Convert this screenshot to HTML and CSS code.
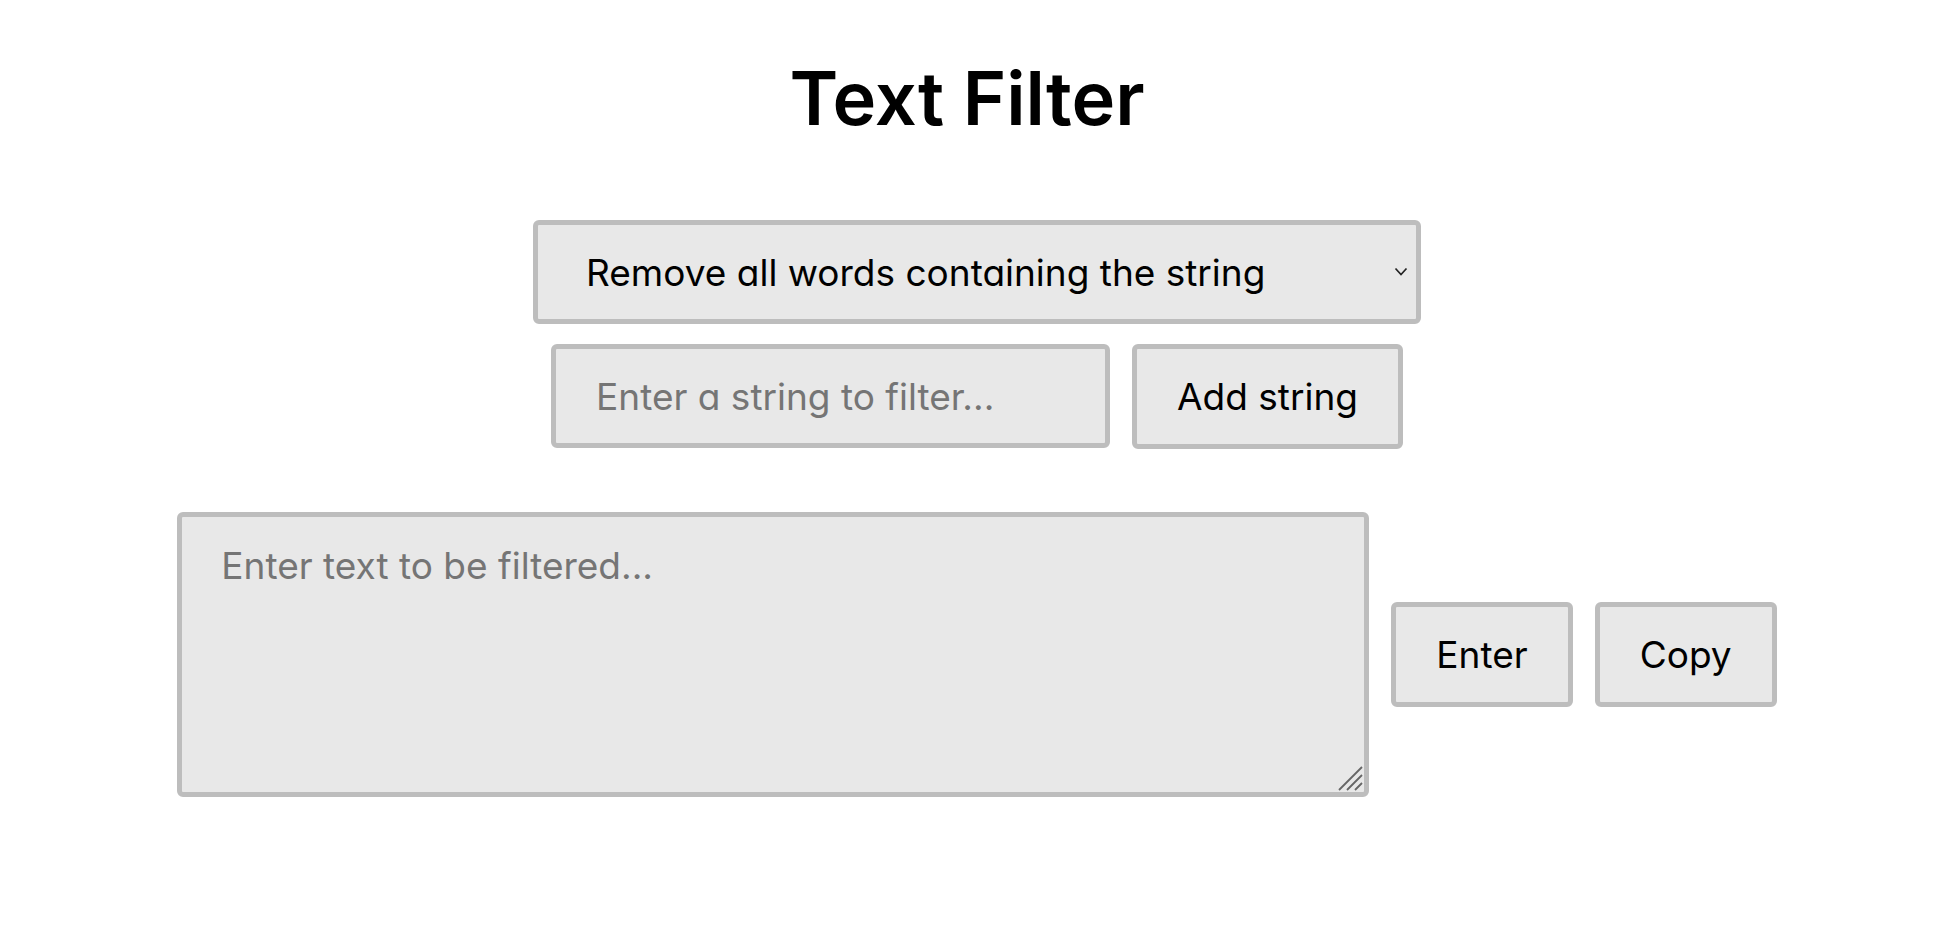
FILE: index.html
```html
<!DOCTYPE html>
<html lang="en">
<head>
  <meta charset="UTF-8" />
  <meta name="viewport" content="width=device-width, initial-scale=1" />
  <title>Text Filter</title>
  <link rel="stylesheet" href="styles.css">
</head>
<body>
  <h1 class="title">Text Filter</h1>

  <div class="controls">
    <div class="select-wrap">
      <select class="mode">
        <option>Remove all words containing the string</option>
        <option>Remove all lines containing the string</option>
        <option>Keep only words containing the string</option>
      </select>
      <svg class="chevron" width="14" height="9" viewBox="0 0 14 9"><polyline points="1.5,1.5 7,7.5 12.5,1.5" fill="none" stroke="#222" stroke-width="1.7"/></svg>
    </div>

    <div class="string-row">
      <input class="string-input" type="text" placeholder="Enter a string to filter...">
      <button class="btn">Add string</button>
    </div>
  </div>

  <div class="editor">
    <div class="area-wrap">
      <textarea class="text-area" placeholder="Enter text to be filtered..."></textarea>
      <svg class="grip" width="26" height="26" viewBox="0 0 26 26">
        <path d="M2 25 L25 2 M10 25 L25 10 M18 25 L25 18" stroke="#666" stroke-width="1.8" fill="none"/>
      </svg>
    </div>
    <button class="btn">Enter</button>
    <button class="btn">Copy</button>
  </div>
</body>
</html>
```

FILE: styles.css
```css
body {
  margin: 0;
  background: #fff;
  color: #000;
  font-family: Inter, "Noto Sans", sans-serif;
  font-feature-settings: "cv11";
}
.title {
  margin: 52px 0 0;
  text-align: center;
  font-size: 74px;
  line-height: 92px;
  font-weight: 600;
}
.controls {
  display: flex;
  flex-direction: column;
  align-items: center;
  gap: 20px;
  margin: 76px 0 0 20px;
}
.mode,
.string-input,
.text-area,
.btn {
  font-family: inherit;
  font-feature-settings: "cv11";
  font-size: 37px;
  color: #000;
  background: #e8e8e8;
  border: 5px solid #bdbdbd;
  border-radius: 6px;
  box-sizing: border-box;
}
.select-wrap {
  position: relative;
}
.mode {
  display: block;
  width: 888px;
  height: 104px;
  padding: 0 40px 0 48px;
  appearance: none;
  -webkit-appearance: none;
}
.chevron {
  position: absolute;
  right: 13px;
  top: 47px;
  pointer-events: none;
}
.string-row {
  display: flex;
  gap: 22px;
}
.string-input {
  width: 559px;
  height: 104px;
  padding: 0 40px;
}
.btn {
  height: 105px;
  padding: 0 40px;
  cursor: pointer;
}
.editor {
  display: flex;
  align-items: center;
  justify-content: center;
  gap: 22px;
  margin: 63px 0 0 20px;
}
.area-wrap {
  position: relative;
}
.text-area {
  display: block;
  width: 1192px;
  height: 285px;
  padding: 26px 39px;
  resize: none;
}
.grip {
  position: absolute;
  right: 6px;
  bottom: 6px;
  pointer-events: none;
}
::placeholder {
  color: #757575;
}
```
